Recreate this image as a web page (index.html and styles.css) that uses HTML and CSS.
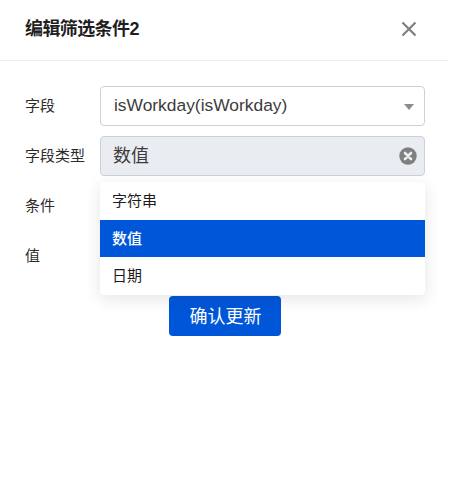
FILE: index.html
```
<!DOCTYPE html>
<html lang="zh-CN">
<head>
<meta charset="utf-8">
<title>编辑筛选条件2</title>
<link rel="stylesheet" href="styles.css">
</head>
<body>
<div class="dialog">
  <header class="head">
    <h1 class="title">编辑筛选条件2</h1>
    <svg class="close" width="16" height="16" viewBox="0 0 16 16"><path d="M1.5 1.5L14.5 14.5M14.5 1.5L1.5 14.5" stroke="#7f7f7f" stroke-width="2.2" fill="none"/></svg>
  </header>
  <form class="form">
    <div class="row">
      <label class="label">字段</label>
      <div class="field"><span class="value latin">isWorkday(isWorkday)</span>
        <svg class="caret" width="10" height="6" viewBox="0 0 10 6"><path d="M0 0H10L5 6Z" fill="#8c8c8c"/></svg>
      </div>
    </div>
    <div class="row">
      <label class="label">字段类型</label>
      <div class="field filled"><span class="value cjk">数值</span>
        <svg class="clear" width="18" height="18" viewBox="0 0 18 18"><circle cx="9" cy="9" r="8.7" fill="#808080"/><path d="M6 6L12 12M12 6L6 12" stroke="#eceef2" stroke-width="2.6" stroke-linecap="round"/></svg>
      </div>
      <ul class="menu">
        <li class="opt">字符串</li>
        <li class="opt active">数值</li>
        <li class="opt">日期</li>
      </ul>
    </div>
    <div class="row">
      <label class="label">条件</label>
      <div class="field"></div>
    </div>
    <div class="row">
      <label class="label">值</label>
      <div class="field"></div>
    </div>
    <div class="actions"><button class="btn" type="button">确认更新</button></div>
  </form>
</div>
</body>
</html>
```
FILE: styles.css
```
* { box-sizing: border-box; }
html, body { margin: 0; height: 100%; background: #fff; }
body { font-family: "Liberation Sans", "Noto Sans CJK SC", sans-serif; color: #333; overflow: hidden; }
.head {
  height: 61px;
  border-bottom: 1px solid #ebeef2;
  padding: 0 32px 2px 25px;
  display: flex;
  align-items: center;
  justify-content: space-between;
}
.title { margin: 0; font-size: 18px; font-weight: 700; color: #1f1f1f; line-height: 24px; letter-spacing: -0.6px; }
.close { display: block; }
.form { padding: 25px 24px 0 25px; }
.row { position: relative; display: flex; align-items: center; height: 40px; margin-bottom: 10px; }
.label { width: 75px; flex: none; font-size: 15px; line-height: 20px; color: #2b2b2b; }
.field {
  flex: 1;
  height: 40px;
  border: 1px solid #ccd0dc;
  border-radius: 4px;
  background: #fff;
  display: flex;
  align-items: center;
  justify-content: space-between;
  padding: 0 10px 0 13px;
}
.filled { background: #e9ecf1; padding: 0 7px 0 12px; }
.value { font-size: 18px; color: #3c3c3c; }
.cjk { line-height: 24px; }
.latin { font-size: 17.4px; margin-top: -2px; }
.caret, .clear { display: block; flex: none; }
.caret { margin-top: 1px; }
.clear { margin-top: -1px; }
.menu {
  position: absolute;
  z-index: 5;
  left: 75px;
  right: 0;
  top: 46px;
  height: 113px;
  margin: 0;
  padding: 0;
  list-style: none;
  background: #fff;
  border-radius: 4px;
  box-shadow: 0 4px 16px rgba(30, 40, 70, 0.12);
  overflow: hidden;
}
.opt { height: 37.67px; line-height: 37px; padding-left: 12px; font-size: 15px; color: #1c1c1c; }
.active { background: #0056d8; color: #fff; font-weight: 500; }
.actions { display: flex; justify-content: center; margin-top: 20px; padding-right: 1px; }
.btn {
  width: 112px;
  height: 40px;
  padding: 0 0 2px 2px;
  border: 0;
  border-radius: 4px;
  background: #0056d8;
  color: #fff;
  font: 400 18px "Liberation Sans", "Noto Sans CJK SC", sans-serif;
}
```
